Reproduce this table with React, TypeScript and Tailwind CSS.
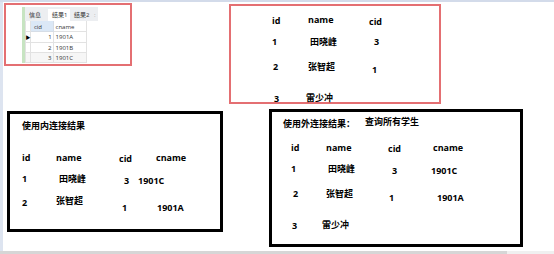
export default function App() {
  return (
    <div className="w-[554px] h-[254px] bg-white flex flex-col overflow-hidden font-['Open_Sans','Noto_Sans_CJK_SC',sans-serif] text-black">
      <div className="h-[2px] bg-[#d3dbea]" />
      <div className="flex flex-1">
        <div className="w-[3px] bg-[#dde4f0]" />
        <div className="flex-1 flex flex-col">
          {/* top row */}
          <div className="flex items-start h-[102px]">
            {/* navicat result preview */}
            <div className="ml-[1px] mt-[1px] w-[128px] h-[63px] border-2 border-[#e46f72] pt-[2px] pl-[16px] flex text-[6px] leading-[8px] text-[#333]">
              <div className="w-[3px] h-[56px] bg-[#c7e4c2]" />
              <div className="w-[73px] flex flex-col">
                <div className="h-[14px] bg-[#eceef1] flex items-end">
                  <div className="w-[23px] h-[12px] pl-[4px] pt-[2px]">信息</div>
                  <div className="w-[22px] h-[12px] bg-white pl-[4px] pt-[2px]">结果1</div>
                  <div className="w-[24px] h-[12px] pl-[4px] pt-[2px]">结果2</div>
                  <div className="h-[12px] pt-[2px] text-[#aaa]">:</div>
                </div>
                <div className="w-[62px] flex flex-col border-l border-[#e2e2e2]">
                  <div className="flex h-[11px]">
                    <div className="w-[5px] bg-white border-r border-b border-[#e2e2e2]" />
                    <div className="w-[23px] bg-[#dbe8f6] border-r border-b border-[#d6dde6] pl-[3px] pt-[2px]">cid</div>
                    <div className="w-[34px] bg-white border-r border-b border-[#e2e2e2] pl-[2px] pt-[2px]">cname</div>
                  </div>
                  {[
                    ['1', '1901A', 'bg-white'],
                    ['2', '1901B', 'bg-white'],
                    ['3', '1901C', 'bg-[#f6f6f6]'],
                  ].map(([id, name, bg], i) => (
                    <div key={id} className={`flex ${i === 0 ? 'h-[11px]' : 'h-[10px]'} ${bg}`}>
                      <div className="w-[5px] border-r border-b border-[#e2e2e2] flex items-center justify-center text-[5px] text-black">
                        {i === 0 ? '▶' : ''}
                      </div>
                      <div className="w-[23px] border-r border-b border-[#e2e2e2] text-right pr-[1px] pt-[1px]">{id}</div>
                      <div className="w-[34px] border-r border-b border-[#e2e2e2] pl-[2px] pt-[1px]">{name}</div>
                    </div>
                  ))}
                </div>
              </div>
            </div>

            {/* student table */}
            <div className="ml-[97px] mt-[2px] w-[212px] h-[100px] border-2 border-[#e46f72] text-[9px] leading-[12px] font-bold">
              <div className="flex items-start mt-[8px] pl-[41px]">
                <span className="w-[36px] mt-[1px]">id</span>
                <span className="w-[61px]">name</span>
                <span className="mt-[2px]">cid</span>
              </div>
              <div className="flex items-start mt-[8px] pl-[41px]">
                <span className="w-[38px]">1</span>
                <span className="w-[64px]">田晓峰</span>
                <span>3</span>
              </div>
              <div className="flex items-start mt-[13px] pl-[42px]">
                <span className="w-[35px]">2</span>
                <span className="w-[64px]">张智超</span>
                <span className="mt-[3px]">1</span>
              </div>
              <div className="flex items-start mt-[16px] pl-[43px]">
                <span className="w-[32px] mt-[1px]">3</span>
                <span>雷少冲</span>
              </div>
            </div>
          </div>

          {/* bottom row */}
          <div className="flex items-start text-[9px] leading-[12px] font-bold">
            <div className="ml-[4px] mt-[7px] w-[216px] h-[121px] border-[3px] border-black">
              <div className="mt-[6px] pl-[12px]">使用内连接结果</div>
              <div className="flex items-start mt-[20px] pl-[12px]">
                <span className="w-[34px]">id</span>
                <span className="w-[63px]">name</span>
                <span className="w-[37px] mt-[1px]">cid</span>
                <span>cname</span>
              </div>
              <div className="flex items-start mt-[8px] pl-[12px]">
                <span className="w-[37px]">1</span>
                <span className="w-[65px]">田晓峰</span>
                <span className="w-[14px] mt-[2px]">3</span>
                <span className="mt-[2px]">1901C</span>
              </div>
              <div className="flex items-start mt-[8px] pl-[12px]">
                <span className="w-[34px] mt-[2px]">2</span>
                <span className="w-[66px]">张智超</span>
                <span className="w-[35px] mt-[7px]">1</span>
                <span className="mt-[7px]">1901A</span>
              </div>
            </div>

            <div className="ml-[46px] mt-[5px] w-[254px] h-[138px] border-[3px] border-black">
              <div className="flex items-start mt-[4px] pl-[11px]">
                <span className="w-[82px] mt-[2px]">使用外连接结果：</span>
                <span>查询所有学生</span>
              </div>
              <div className="flex items-start mt-[12px] pl-[19px]">
                <span className="w-[35px]">id</span>
                <span className="w-[62px]">name</span>
                <span className="w-[45px] mt-[1px]">cid</span>
                <span>cname</span>
              </div>
              <div className="flex items-start mt-[8px] pl-[19px]">
                <span className="w-[37px]">1</span>
                <span className="w-[64px]">田晓峰</span>
                <span className="w-[39px] mt-[2px]">3</span>
                <span className="mt-[2px]">1901C</span>
              </div>
              <div className="flex items-start mt-[11px] pl-[21px]">
                <span className="w-[33px]">2</span>
                <span className="w-[63px]">张智超</span>
                <span className="w-[48px] mt-[4px]">1</span>
                <span className="mt-[4px]">1901A</span>
              </div>
              <div className="flex items-start mt-[15px] pl-[20px]">
                <span className="w-[30px] mt-[1px]">3</span>
                <span>雷少冲</span>
              </div>
            </div>
          </div>
        </div>
      </div>
      <div className="h-[3px] flex">
        <div className="w-[507px] bg-[#d6d6d6]" />
        <div className="flex-1 bg-[#f0f0f0]" />
      </div>
    </div>
  )
}
